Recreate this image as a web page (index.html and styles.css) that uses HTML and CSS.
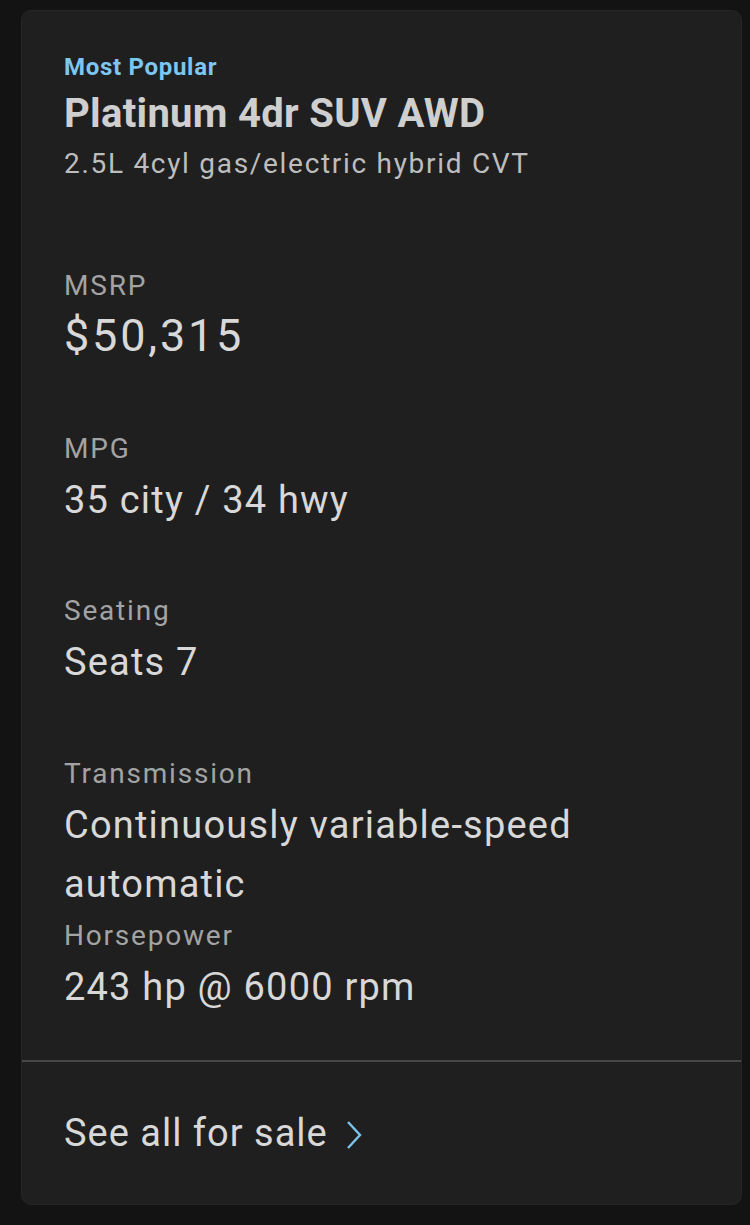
FILE: index.html
```html
<!DOCTYPE html>
<html>
  <head>
    <meta charset="utf-8" />
    <link rel="stylesheet" href="styles.css">
  </head>
  <body>
    <div class="card">
      <div class="body">
        <div class="badge">Most Popular</div>
        <div class="title">Platinum 4dr SUV AWD</div>
        <div class="sub">2.5L 4cyl gas/electric hybrid CVT</div>

        <div class="specs">
          <div class="spec">
            <div class="label">MSRP</div>
            <div class="value price">$50,315</div>
          </div>
          <div class="spec">
            <div class="label">MPG</div>
            <div class="value">35 city / 34 hwy</div>
          </div>
          <div class="spec">
            <div class="label">Seating</div>
            <div class="value">Seats 7</div>
          </div>
          <div class="spec">
            <div class="label">Transmission</div>
            <div class="value">Continuously variable-speed automatic</div>
          </div>
          <div class="spec last">
            <div class="label">Horsepower</div>
            <div class="value">243 hp @ 6000 rpm</div>
          </div>
        </div>
      </div>
      <div class="footer">
        <span class="link">See all for sale</span>
        <svg class="chevron" width="18" height="30" viewBox="0 0 18 30">
          <polyline points="3,2 15,15 3,28" fill="none" stroke="#7cc4ec" stroke-width="2.4"/>
        </svg>
      </div>
    </div>
  </body>
</html>
```

FILE: styles.css
```css
*{
  box-sizing: border-box;
}
body{
  background: #131313;
  margin: 0px;
  padding: 10px 8px 20px 21px;
  font-family: Roboto, "Noto Sans", sans-serif;
  color: #d6d6d6;
}
.card{
  width: 721px;
  height: 1195px;
  background: #1f1f1f;
  border: 1px solid #262626;
  border-radius: 10px;
}
.body{
  padding: 41px 30px 43px 42px;
  border-bottom: 2px solid #474747;
}
.badge{
  font-size: 24px;
  line-height: 30px;
  font-weight: 700;
  letter-spacing: 0.7px;
  color: #7cc6f0;
}
.title{
  font-size: 40px;
  line-height: 58px;
  font-weight: 700;
  letter-spacing: 0.3px;
  margin-top: 3px;
  color: #cfcfcf;
}
.sub{
  font-size: 28px;
  line-height: 41px;
  letter-spacing: 1.7px;
  color: #bdbdbd;
}
.specs{
  margin-top: 84px;
}
.spec{
  height: 162.5px;
}
.spec.last{
  height: auto;
}
.label{
  font-size: 28px;
  line-height: 36px;
  letter-spacing: 1.8px;
  color: #a3a3a3;
}
.value{
  font-size: 38px;
  line-height: 59px;
  letter-spacing: 1.2px;
  margin-top: 4px;
  color: #d8d8d8;
}
.value.price{
  font-size: 45px;
  line-height: 64px;
  letter-spacing: 2.8px;
  margin-top: 0px;
}
.footer{
  display: flex;
  align-items: center;
  gap: 17px;
  padding: 49px 42px 0px 42px;
}
.link{
  font-size: 38px;
  line-height: 44px;
  letter-spacing: 1px;
  color: #d8d8d8;
}
.chevron{
  display: block;
  margin-top: 3px;
}
```
